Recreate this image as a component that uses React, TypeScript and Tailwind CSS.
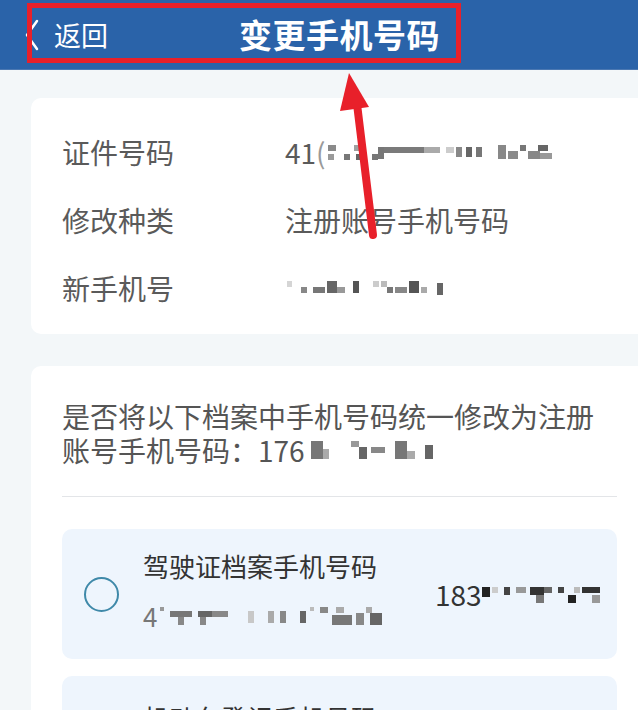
import React from 'react';

type Block = [number, number, number, number, string];

// pixelated (masked) digits, drawn as small grey blocks
function Mosaic({ w, h, blocks }: { w: number; h: number; blocks: Block[] }) {
  return (
    <svg width={w} height={h} viewBox={`0 0 ${w} ${h}`} className="shrink-0">
      {blocks.map(([x, y, bw, bh, c], i) => (
        <rect key={i} x={x} y={y} width={bw} height={bh} fill={c} />
      ))}
    </svg>
  );
}

const idMask: Block[] = [
  [2, 2, 8, 6, '#8a8a8a'], [2, 11, 6, 6, '#9a9a9a'], [18, 11, 6, 6, '#777'],
  [28, 2, 8, 6, '#a0a0a0'], [30, 11, 6, 6, '#666'], [46, 11, 6, 6, '#777'],
  [52, 4, 6, 12, '#777'], [58, 4, 40, 6, '#7a7a7a'], [98, 4, 16, 6, '#aaa'],
  [120, 4, 8, 6, '#ccc'], [130, 4, 6, 10, '#888'], [140, 4, 6, 10, '#666'], [150, 4, 6, 10, '#777'],
  [172, 2, 8, 14, '#888'], [182, 8, 10, 8, '#8a8a8a'], [194, 2, 6, 6, '#777'],
  [202, 8, 12, 8, '#888'], [212, 2, 10, 6, '#666'], [214, 10, 12, 6, '#999'],
];

const newMask: Block[] = [
  [0, 2, 5, 6, '#d5d5d5'], [14, 8, 6, 6, '#888'], [26, 8, 12, 6, '#777'],
  [40, 2, 10, 12, '#666'], [50, 8, 8, 6, '#999'], [66, 2, 6, 12, '#555'],
  [86, 2, 6, 6, '#ccc'], [94, 2, 6, 6, '#bbb'], [100, 8, 6, 6, '#777'],
  [108, 8, 12, 6, '#888'], [122, 2, 10, 12, '#555'], [134, 8, 6, 6, '#aaa'],
  [150, 4, 6, 12, '#666'],
];

const regMask: Block[] = [
  [0, 0, 12, 18, '#777'], [12, 8, 6, 10, '#aaa'], [40, 0, 8, 6, '#999'],
  [48, 6, 8, 12, '#666'], [60, 6, 14, 6, '#888'], [84, 0, 12, 18, '#777'],
  [96, 10, 8, 8, '#aaa'], [114, 4, 8, 14, '#666'],
];

const licIdMask: Block[] = [
  [0, 0, 4, 4, '#999'], [10, 4, 22, 6, '#777'], [18, 10, 6, 8, '#888'],
  [38, 4, 14, 6, '#666'], [40, 10, 6, 8, '#888'], [52, 4, 16, 6, '#888'],
  [88, 4, 6, 12, '#c8c8c8'], [108, 4, 6, 12, '#aaa'], [120, 4, 6, 12, '#888'],
  [140, 4, 6, 12, '#666'], [150, 0, 4, 4, '#bbb'], [160, 0, 8, 6, '#888'],
  [176, 0, 8, 6, '#aaa'], [172, 8, 20, 10, '#777'], [196, 6, 8, 12, '#888'],
  [206, 0, 6, 6, '#aaa'], [210, 6, 12, 12, '#666'],
];

const phoneMask: Block[] = [
  [0, 2, 8, 10, '#222'], [10, 2, 6, 6, '#ccc'], [22, 2, 6, 8, '#444'],
  [34, 2, 10, 6, '#999'], [48, 2, 14, 8, '#333'], [54, 10, 8, 8, '#777'],
  [62, 2, 8, 6, '#666'], [76, 2, 6, 6, '#444'], [86, 10, 8, 8, '#222'],
  [92, 2, 6, 6, '#bbb'], [100, 2, 18, 6, '#333'], [110, 10, 8, 8, '#999'],
];

export default function App() {
  return (
    <div
      className="relative w-[638px] h-[710px] overflow-hidden bg-[#f3f7f9]"
      style={{ fontFamily: '"Noto Sans CJK SC", "Noto Sans", sans-serif' }}
    >
      {/* Header */}
      <div className="h-[70px] bg-[#2a63a9] border-b border-[#4b78b2] flex items-center text-white">
        <svg width="20" height="34" viewBox="0 0 20 34" className="ml-[22px]">
          <polyline points="15,3 5,17 15,31" fill="none" stroke="white" strokeWidth="2.5" strokeLinecap="round" strokeLinejoin="round" />
        </svg>
        <span className="ml-[12px] text-[27px] leading-none">返回</span>
        <span className="ml-[131px] text-[33px] font-bold leading-none tracking-[0.5px]">变更手机号码</span>
      </div>

      {/* Info card */}
      <div className="mt-[28px] ml-[31px] bg-white rounded-l-[10px] pt-[20px] pb-[12px] pl-[31px]">
        {[
          ['证件号码', 'id'],
          ['修改种类', 'type'],
          ['新手机号', 'new'],
        ].map(([label, key]) => (
          <div key={key} className="h-[68px] flex items-center text-[28px] text-[#5a5a5a]">
            <span className="w-[223px]">{label}</span>
            {key === 'id' && (
              <span className="flex items-center">
                41<span className="text-[#9a9a9a]">(</span>
                <Mosaic w={228} h={18} blocks={idMask} />
              </span>
            )}
            {key === 'type' && <span>注册账号手机号码</span>}
            {key === 'new' && (
              <span className="flex items-center ml-[2px]">
                <Mosaic w={180} h={18} blocks={newMask} />
              </span>
            )}
          </div>
        ))}
      </div>

      {/* Sync card */}
      <div className="mt-[32px] ml-[31px] bg-white rounded-l-[10px] pt-[33px] pl-[31px] pr-[21px] pb-[20px]">
        <div className="text-[28px] leading-[34px] text-[#555]">
          <p>是否将以下档案中手机号码统一修改为注册</p>
          <p className="flex items-center">
            账号手机号码：176
            <span className="ml-[6px]">
              <Mosaic w={128} h={18} blocks={regMask} />
            </span>
          </p>
        </div>
        <div className="mt-[29px] h-px bg-[#e3e5e8]" />

        <div className="mt-[32px] flex flex-col gap-[17px]">
          <div className="h-[130px] rounded-[10px] bg-[#eef5fd] flex items-center pl-[22px]">
            <div className="w-[35px] h-[35px] rounded-full border-2 border-[#3f89a9] shrink-0" />
            <div className="ml-[24px] w-[292px] self-start pt-[19px] flex flex-col gap-[14px]">
              <span className="text-[26px] leading-[36px] text-[#333]">驾驶证档案手机号码</span>
              <span className="flex items-center text-[26px] leading-[36px] text-[#777]">
                4
                <span className="ml-[3px]">
                  <Mosaic w={224} h={18} blocks={licIdMask} />
                </span>
              </span>
            </div>
            <span className="flex items-center text-[28px] text-[#333]">
              183
              <Mosaic w={120} h={18} blocks={phoneMask} />
            </span>
          </div>

          <div className="h-[130px] rounded-[10px] bg-[#eef5fd] flex items-start pl-[81px] pt-[24px]">
            <span className="text-[26px] leading-[36px] text-[#333]">机动车登记手机号码</span>
          </div>
        </div>
      </div>

      {/* annotation overlay */}
      <svg className="absolute inset-0 pointer-events-none" width="638" height="710" viewBox="0 0 638 710">
        <rect x="29.5" y="5.5" width="429" height="55" fill="none" stroke="#e8202a" strokeWidth="5" />
        <line x1="373" y1="235" x2="357" y2="104" stroke="#e8202a" strokeWidth="8" strokeLinecap="round" />
        <polygon points="349,73 340,111 369,107" fill="#e8202a" />
      </svg>
    </div>
  );
}
